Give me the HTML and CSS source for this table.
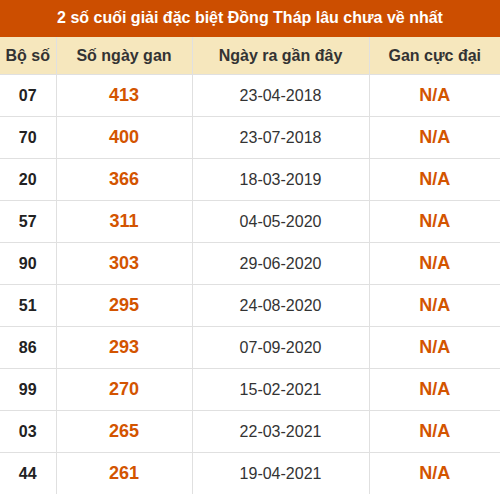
FILE: index.html
```html
<!DOCTYPE html>
<html lang="vi">
<head>
<meta charset="utf-8">
<link rel="stylesheet" href="styles.css">
</head>
<body>
<div class="box">
  <div class="title">2 số cuối giải đặc biệt Đồng Tháp lâu chưa về nhất</div>
  <table class="gan">
    <colgroup>
      <col class="c1"><col class="c2"><col class="c3"><col class="c4">
    </colgroup>
    <thead>
      <tr><th>Bộ số</th><th>Số ngày gan</th><th>Ngày ra gần đây</th><th>Gan cực đại</th></tr>
    </thead>
    <tbody>
      <tr><td class="num">07</td><td class="days">413</td><td class="date">23-04-2018</td><td class="max">N/A</td></tr>
      <tr><td class="num">70</td><td class="days">400</td><td class="date">23-07-2018</td><td class="max">N/A</td></tr>
      <tr><td class="num">20</td><td class="days">366</td><td class="date">18-03-2019</td><td class="max">N/A</td></tr>
      <tr><td class="num">57</td><td class="days">311</td><td class="date">04-05-2020</td><td class="max">N/A</td></tr>
      <tr><td class="num">90</td><td class="days">303</td><td class="date">29-06-2020</td><td class="max">N/A</td></tr>
      <tr><td class="num">51</td><td class="days">295</td><td class="date">24-08-2020</td><td class="max">N/A</td></tr>
      <tr><td class="num">86</td><td class="days">293</td><td class="date">07-09-2020</td><td class="max">N/A</td></tr>
      <tr><td class="num">99</td><td class="days">270</td><td class="date">15-02-2021</td><td class="max">N/A</td></tr>
      <tr><td class="num">03</td><td class="days">265</td><td class="date">22-03-2021</td><td class="max">N/A</td></tr>
      <tr><td class="num">44</td><td class="days">261</td><td class="date">19-04-2021</td><td class="max">N/A</td></tr>
    </tbody>
  </table>
</div>
</body>
</html>
```
FILE: styles.css
```css
html, body {
  margin: 0;
  padding: 0;
  background: #fff;
}
body {
  font-family: "Liberation Sans", Arial, sans-serif;
  color: #333;
}
.box {
  width: 500px;
}
.title {
  background: #cc4e00;
  color: #fff;
  font-weight: bold;
  font-size: 16px;
  height: 37px;
  line-height: 36px;
  text-align: center;
}
.gan {
  width: 500px;
  border-collapse: collapse;
  table-layout: fixed;
}
.c1 { width: 56px; }
.c2 { width: 136px; }
.c3 { width: 177px; }
.c4 { width: 131px; }
.gan th {
  background: #f6e7bd;
  font-size: 16px;
  font-weight: bold;
  color: #333;
  height: 37px;
  padding: 0;
  border-right: 1px solid #e0e0e0;
  border-bottom: 1px solid #e0e0e0;
}
.gan td {
  height: 41px;
  padding: 0;
  text-align: center;
  border-right: 1px solid #e0e0e0;
  border-bottom: 1px solid #e0e0e0;
}
.gan th:last-child,
.gan td:last-child {
  border-right: none;
}
.num {
  font-size: 16px;
  font-weight: bold;
  color: #222;
}
.days {
  font-size: 18px;
  font-weight: bold;
  color: #d35400;
}
.date {
  font-size: 16px;
  color: #333;
}
.max {
  font-size: 18px;
  font-weight: bold;
  color: #d35400;
}
```
